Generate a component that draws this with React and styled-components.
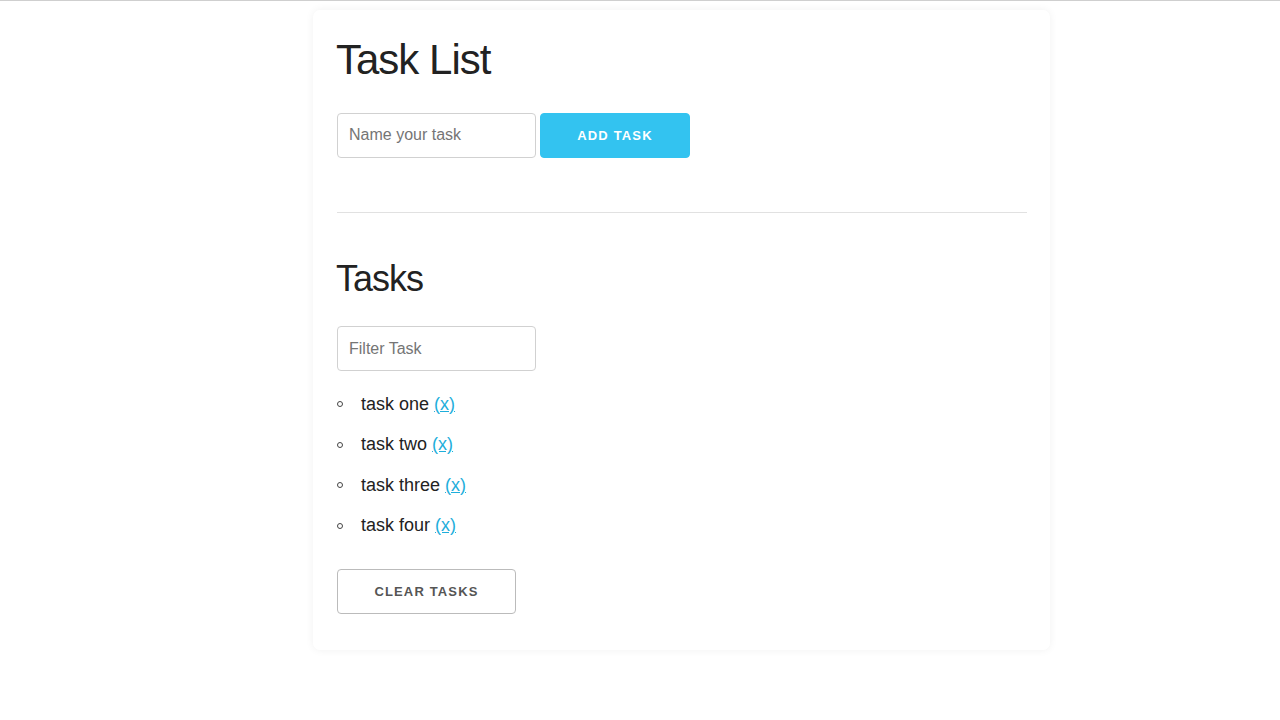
import React, { useState } from 'react';
import styled, { createGlobalStyle } from 'styled-components';

const GlobalStyle = createGlobalStyle`
  html, body {
    margin: 0;
    padding: 0;
    background: #fff;
  }
  body {
    border-top: 1px solid #cfcfcf;
    font-family: "Liberation Sans", Arial, Helvetica, sans-serif;
    color: #222;
  }
`;

const Page = styled.div`
  display: flex;
  padding: 9px 0 60px 313px;
`;

const Card = styled.div`
  width: 737px;
  box-sizing: border-box;
  padding: 25px 23px 36px 23px;
  background: #fff;
  border-radius: 7px;
  box-shadow: 0 0 8px rgba(0, 0, 0, 0.06);
`;

const Title = styled.h1`
  margin: 0 0 ${(p) => (p.small ? '26px' : '27.6px')} 0;
  font-size: ${(p) => (p.small ? '36px' : '42px')};
  font-weight: 400;
  line-height: 1.2;
  letter-spacing: -1px;
  color: #222;
`;

const Row = styled.form`
  display: flex;
  gap: 4px;
  align-items: center;
  margin: 0;
`;

const Input = styled.input`
  box-sizing: border-box;
  width: 199px;
  height: 45px;
  margin-left: 1px;
  padding: 0 11px;
  border: 1px solid #d1d1d1;
  border-radius: 4px;
  font-family: inherit;
  font-size: 16px;
  color: #333;
  background: #fff;
  outline: none;
  &::placeholder {
    color: #757575;
  }
`;

const Button = styled.button`
  box-sizing: border-box;
  height: 45px;
  width: ${(p) => p.width};
  padding: 0;
  border-radius: 4px;
  border: 1px solid ${(p) => (p.primary ? '#33c3f0' : '#bbb')};
  background: ${(p) => (p.primary ? '#33c3f0' : 'transparent')};
  color: ${(p) => (p.primary ? '#fff' : '#555')};
  font-family: inherit;
  font-size: 13px;
  font-weight: 700;
  letter-spacing: 1.15px;
  text-transform: uppercase;
  cursor: pointer;
`;

const Divider = styled.hr`
  margin: 54px 0 44px 1px;
  border: 0;
  border-top: 1px solid #e1e1e1;
`;

const List = styled.ul`
  list-style: none;
  margin: 18.6px 0 29px 0;
  padding: 0;
`;

const Item = styled.li`
  display: flex;
  align-items: center;
  font-size: 18px;
  line-height: 28.8px;
  margin-bottom: 11.7px;
  color: #222;
  &::before {
    content: '';
    width: 4px;
    height: 4px;
    margin: 0 18px 0 1px;
    border: 1.5px solid #444;
    border-radius: 50%;
  }
`;

const Remove = styled.a`
  margin-left: 5px;
  color: #1eaedb;
  text-decoration: underline;
  cursor: pointer;
`;

export default function App() {
  const [tasks] = useState(['task one', 'task two', 'task three', 'task four']);

  return (
    <>
      <GlobalStyle />
      <Page>
        <Card>
          <Title>Task List</Title>
          <Row onSubmit={(e) => e.preventDefault()}>
            <Input type="text" placeholder="Name your task" />
            <Button primary width="150px" type="submit">Add Task</Button>
          </Row>
          <Divider />
          <Title small>Tasks</Title>
          <Input type="text" placeholder="Filter Task" />
          <List>
            {tasks.map((t) => (
              <Item key={t}>
                {t}
                <Remove href="#">(x)</Remove>
              </Item>
            ))}
          </List>
          <Button width="179px" style={{ marginLeft: 1 }}>Clear Tasks</Button>
        </Card>
      </Page>
    </>
  );
}
